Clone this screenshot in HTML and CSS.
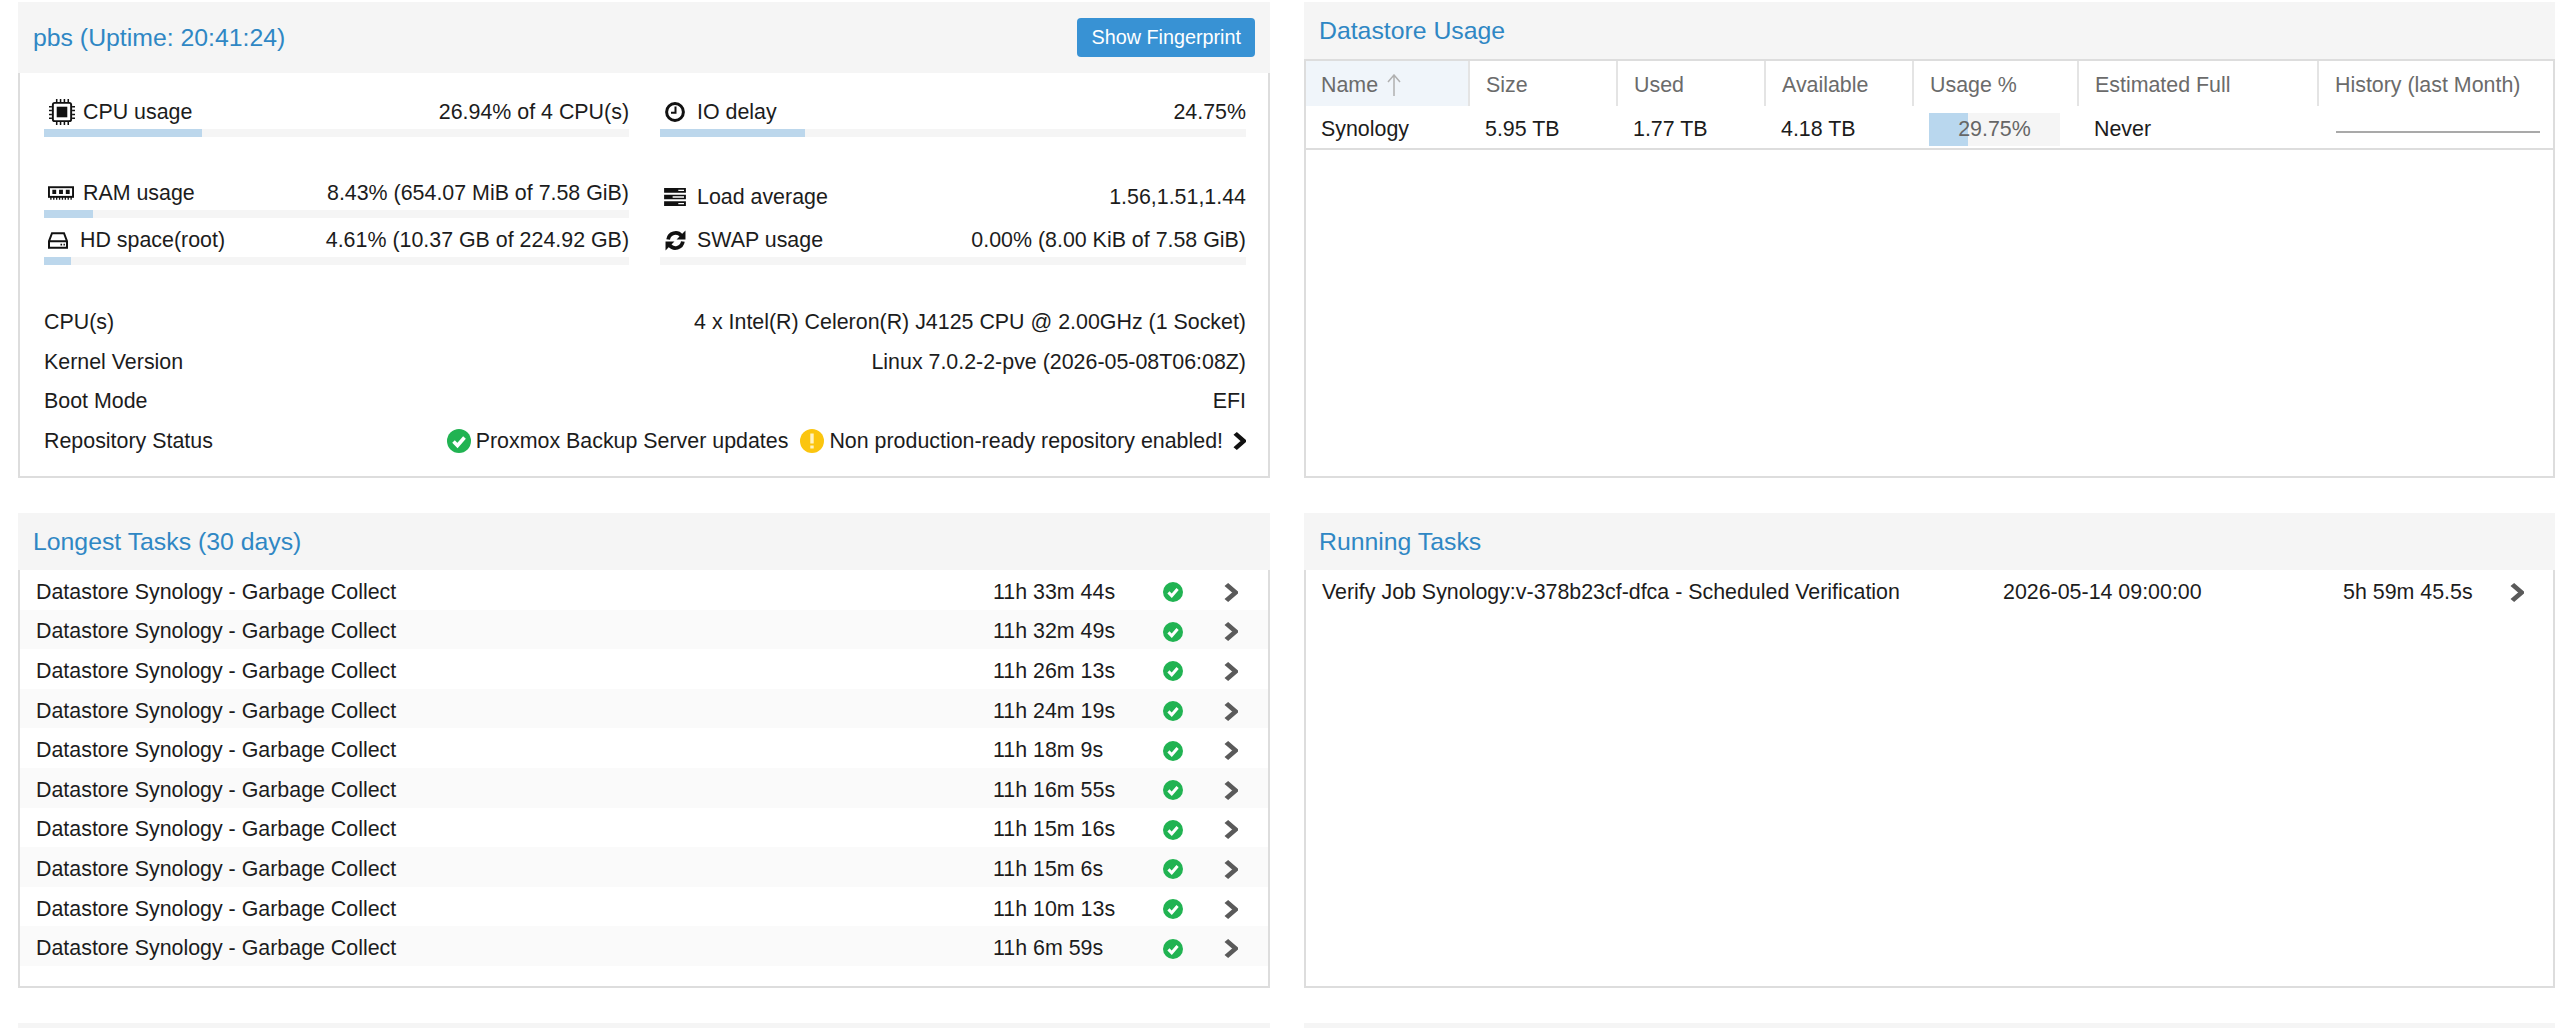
FILE: index.html
```html
<!DOCTYPE html>
<html lang="en">
<head>
    <meta charset="UTF-8">
    <title>Proxmox Backup Server - Dashboard</title>
    <link rel="stylesheet" href="styles.css">
</head>
<body>
    <svg class="sprites" width="0" height="0">
        <symbol id="check" viewBox="0 0 24 24">
            <circle cx="12" cy="12" r="12" fill="#21b352"/>
            <polyline points="6.5,12.5 10.5,16.5 17.5,8.5" fill="none" stroke="#fff" stroke-width="3.6"/>
        </symbol>
        <symbol id="chevron" viewBox="1 0.5 12 21" preserveAspectRatio="none">
            <polyline points="3,3 11,11 3,19" fill="none" stroke="currentColor" stroke-width="4.4"/>
        </symbol>
    </svg>

    <div class="dashboard">

        <!-- Node status -->
        <section class="panel">
            <header class="panel-head head-tall">
                <h2>pbs (Uptime: 20:41:24)</h2>
                <button class="btn">Show Fingerprint</button>
            </header>
            <div class="panel-body status-body">
                <div class="metrics">
                    <div class="metric gap-after">
                        <div class="metric-line">
                            <svg class="icon icon-cpu" viewBox="0 0 27 27">
                                <rect x="4" y="4" width="19" height="19" rx="2" fill="none" stroke="#111" stroke-width="2"/>
                                <rect x="8" y="8" width="11" height="11" fill="#111"/>
                                <path d="M8 0v3M12 0v3M16 0v3M20 0v3M8 24v3M12 24v3M16 24v3M20 24v3M0 8h3M0 12h3M0 16h3M0 20h3M24 8h3M24 12h3M24 16h3M24 20h3" stroke="#111" stroke-width="1.6"/>
                            </svg>
                            <span class="metric-label">CPU usage</span>
                            <span class="metric-value">26.94% of 4 CPU(s)</span>
                        </div>
                        <div class="bar"><div class="bar-fill" style="width: 26.94%"></div></div>
                    </div>
                    <div class="metric gap-after">
                        <div class="metric-line">
                            <svg class="icon icon-clock" viewBox="0 0 20 20">
                                <circle cx="10" cy="10" r="8.4" fill="none" stroke="#111" stroke-width="3"/>
                                <path d="M10.5 4.5v6.2H6" fill="none" stroke="#111" stroke-width="2"/>
                            </svg>
                            <span class="metric-label">IO delay</span>
                            <span class="metric-value">24.75%</span>
                        </div>
                        <div class="bar"><div class="bar-fill" style="width: 24.75%"></div></div>
                    </div>
                    <div class="metric">
                        <div class="metric-line">
                            <svg class="icon icon-ram" viewBox="0 0 27 14">
                                <rect x="1" y="1" width="25" height="10" fill="none" stroke="#111" stroke-width="2"/>
                                <path d="M4.5 3.5h4v4.5h-4zM11.5 3.5h4v4.5h-4zM18.5 3.5h4v4.5h-4z" fill="#111"/>
                                <path d="M3 11v3M6 11v3M9 11v3M12 11v3M15 11v3M18 11v3M21 11v3M24 11v3" stroke="#111" stroke-width="1.4"/>
                            </svg>
                            <span class="metric-label">RAM usage</span>
                            <span class="metric-value">8.43% (654.07 MiB of 7.58 GiB)</span>
                        </div>
                        <div class="bar"><div class="bar-fill" style="width: 8.43%"></div></div>
                    </div>
                    <div class="metric">
                        <div class="metric-line load-line">
                            <svg class="icon icon-load" viewBox="0 0 23 19">
                                <path d="M0 0h23v5H0zM0 7h23v5H0zM0 14h23v5H0z" fill="#111"/>
                                <path d="M15 2.5h6M9 9.5h12M15 16.5h6" stroke="#fff" stroke-width="1.5"/>
                            </svg>
                            <span class="metric-label">Load average</span>
                            <span class="metric-value">1.56,1.51,1.44</span>
                        </div>
                    </div>
                    <div class="metric">
                        <div class="metric-line">
                            <svg class="icon icon-hd" viewBox="0 0 20 17">
                                <path d="M4 1.2h12l3 8v6.6H1V9.2zM1 9.2h18" fill="none" stroke="#111" stroke-width="2"/>
                                <path d="M12.5 12.6h1.6M15.5 12.6h1.4" stroke="#111" stroke-width="1.6"/>
                            </svg>
                            <span class="metric-label">HD space(root)</span>
                            <span class="metric-value">4.61% (10.37 GB of 224.92 GB)</span>
                        </div>
                        <div class="bar"><div class="bar-fill" style="width: 4.61%"></div></div>
                    </div>
                    <div class="metric">
                        <div class="metric-line">
                            <svg class="icon icon-swap" viewBox="0 0 20 20">
                                <path d="M3 9a7.2 7.2 0 0 1 12.6-3.6M17 11a7.2 7.2 0 0 1-12.6 3.6" fill="none" stroke="#111" stroke-width="3.6"/>
                                <path d="M19.5 .5v8.5H11zM.5 19.5V11H9z" fill="#111"/>
                            </svg>
                            <span class="metric-label">SWAP usage</span>
                            <span class="metric-value">0.00% (8.00 KiB of 7.58 GiB)</span>
                        </div>
                        <div class="bar"><div class="bar-fill" style="width: 0%"></div></div>
                    </div>
                </div>

                <div class="info-row"><span>CPU(s)</span><span>4 x Intel(R) Celeron(R) J4125 CPU @ 2.00GHz (1 Socket)</span></div>
                <div class="info-row"><span>Kernel Version</span><span>Linux 7.0.2-2-pve (2026-05-08T06:08Z)</span></div>
                <div class="info-row"><span>Boot Mode</span><span>EFI</span></div>
                <div class="info-row">
                    <span>Repository Status</span>
                    <span class="repo-status">
                        <svg class="status-icon"><use href="#check"/></svg>
                        <span class="repo-text">Proxmox Backup Server updates</span>
                        <svg class="status-icon warn-icon" viewBox="0 0 24 24">
                            <circle cx="12" cy="12" r="12" fill="#fbc50f"/>
                            <path d="M12 4.5v10M12 16.5v3" stroke="#fff3c4" stroke-width="3.4"/>
                        </svg>
                        <span class="repo-text">Non production-ready repository enabled!</span>
                        <svg class="repo-chevron"><use href="#chevron"/></svg>
                    </span>
                </div>
            </div>
        </section>

        <!-- Datastore usage -->
        <section class="panel">
            <header class="panel-head">
                <h2>Datastore Usage</h2>
            </header>
            <div class="panel-body table-body">
                <table class="grid">
                    <thead>
                        <tr>
                            <th class="sorted col-name">
                                Name
                                <svg class="sort-arrow" viewBox="0 0 14 22"><path d="M7 22V1M1 8l6-7 6 7" fill="none" stroke="#b0b0b0" stroke-width="1.5"/></svg>
                            </th>
                            <th class="col-num">Size</th>
                            <th class="col-num">Used</th>
                            <th class="col-num">Available</th>
                            <th class="col-usage">Usage %</th>
                            <th class="col-full">Estimated Full</th>
                            <th>History (last Month)</th>
                        </tr>
                    </thead>
                    <tbody>
                        <tr>
                            <td>Synology</td>
                            <td>5.95 TB</td>
                            <td>1.77 TB</td>
                            <td>4.18 TB</td>
                            <td class="usage-cell">
                                <div class="usage"><div class="usage-fill" style="width: 29.75%"></div><span class="usage-text">29.75%</span></div>
                            </td>
                            <td>Never</td>
                            <td class="history-cell"><div class="sparkline"></div></td>
                        </tr>
                    </tbody>
                </table>
            </div>
        </section>

        <!-- Longest tasks -->
        <section class="panel">
            <header class="panel-head">
                <h2>Longest Tasks (30 days)</h2>
            </header>
            <div class="panel-body">
                <div class="task"><span>Datastore Synology - Garbage Collect</span><span>11h 33m 44s</span><svg class="task-status"><use href="#check"/></svg><svg class="task-chevron"><use href="#chevron"/></svg></div>
                <div class="task"><span>Datastore Synology - Garbage Collect</span><span>11h 32m 49s</span><svg class="task-status"><use href="#check"/></svg><svg class="task-chevron"><use href="#chevron"/></svg></div>
                <div class="task"><span>Datastore Synology - Garbage Collect</span><span>11h 26m 13s</span><svg class="task-status"><use href="#check"/></svg><svg class="task-chevron"><use href="#chevron"/></svg></div>
                <div class="task"><span>Datastore Synology - Garbage Collect</span><span>11h 24m 19s</span><svg class="task-status"><use href="#check"/></svg><svg class="task-chevron"><use href="#chevron"/></svg></div>
                <div class="task"><span>Datastore Synology - Garbage Collect</span><span>11h 18m 9s</span><svg class="task-status"><use href="#check"/></svg><svg class="task-chevron"><use href="#chevron"/></svg></div>
                <div class="task"><span>Datastore Synology - Garbage Collect</span><span>11h 16m 55s</span><svg class="task-status"><use href="#check"/></svg><svg class="task-chevron"><use href="#chevron"/></svg></div>
                <div class="task"><span>Datastore Synology - Garbage Collect</span><span>11h 15m 16s</span><svg class="task-status"><use href="#check"/></svg><svg class="task-chevron"><use href="#chevron"/></svg></div>
                <div class="task"><span>Datastore Synology - Garbage Collect</span><span>11h 15m 6s</span><svg class="task-status"><use href="#check"/></svg><svg class="task-chevron"><use href="#chevron"/></svg></div>
                <div class="task"><span>Datastore Synology - Garbage Collect</span><span>11h 10m 13s</span><svg class="task-status"><use href="#check"/></svg><svg class="task-chevron"><use href="#chevron"/></svg></div>
                <div class="task"><span>Datastore Synology - Garbage Collect</span><span>11h 6m 59s</span><svg class="task-status"><use href="#check"/></svg><svg class="task-chevron"><use href="#chevron"/></svg></div>
            </div>
        </section>

        <!-- Running tasks -->
        <section class="panel">
            <header class="panel-head">
                <h2>Running Tasks</h2>
            </header>
            <div class="panel-body">
                <div class="task running">
                    <span>Verify Job Synology:v-378b23cf-dfca - Scheduled Verification</span>
                    <span>2026-05-14 09:00:00</span>
                    <span>5h 59m 45.5s</span>
                    <svg class="task-chevron"><use href="#chevron"/></svg>
                </div>
            </div>
        </section>

        <!-- Next row, cut off by the window -->
        <section class="panel"><header class="panel-head head-stub"></header></section>
        <section class="panel"><header class="panel-head head-stub"></header></section>
    </div>
</body>
</html>
```

FILE: styles.css
```css
html, body {
    height: 100%;
    margin: 0;
    overflow: hidden;
    background-color: #ffffff;
}

body {
    font-family: "Liberation Sans", Arial, sans-serif;
    font-size: 21.4px;
    color: #1c1c1c;
}

.sprites {
    position: absolute;
}

/* Main Layout */
.dashboard {
    display: grid;
    grid-template-columns: 1252px 1251px;
    grid-template-rows: 476px 475px 5px;
    column-gap: 34px;
    row-gap: 35px;
    padding: 2px 0 0 18px;
}

/* Panels */
.panel {
    display: flex;
    flex-direction: column;
    min-height: 0;
}

.panel-head {
    display: flex;
    flex-shrink: 0;
    align-items: center;
    justify-content: space-between;
    height: 57px;
    padding: 0 15px;
    background-color: #f5f5f5;
}

.head-tall {
    height: 71px;
}

.head-stub {
    height: 5px;
}

.panel-head h2 {
    margin: 0;
    font-size: 24.8px;
    font-weight: normal;
    color: #2f87c4;
}

.panel-body {
    flex: 1;
    border: 2px solid #dddddd;
    border-top: 0;
}

.btn {
    height: 39px;
    padding: 0 14px;
    font-family: inherit;
    font-size: 19.8px;
    color: #ffffff;
    background-color: #3892d4;
    border: 0;
    border-radius: 4px;
}

/* Node Status */
.status-body {
    padding: 22px 24px 0;
}

.metrics {
    display: grid;
    grid-template-columns: 585px 586px;
    column-gap: 31px;
    margin-bottom: 33px;
}

.metric {
    height: 42px;
    margin-bottom: 5px;
}

.gap-after {
    margin-bottom: 39px;
}

.metric-line {
    display: flex;
    align-items: center;
    height: 34px;
}

.load-line {
    padding-top: 4px;
}

.metric-label {
    flex: 1;
}

.icon {
    flex-shrink: 0;
}

.icon-cpu {
    width: 26px;
    height: 26px;
    margin-left: 5px;
    margin-right: 8px;
}

.icon-ram {
    width: 26px;
    height: 14px;
    margin-left: 4px;
    margin-right: 9px;
}

.icon-hd {
    width: 20px;
    height: 17px;
    margin-left: 4px;
    margin-right: 12px;
}

.icon-clock {
    width: 20px;
    height: 20px;
    margin-left: 5px;
    margin-right: 12px;
}

.icon-load {
    width: 22px;
    height: 18px;
    margin-left: 4px;
    margin-right: 11px;
}

.icon-swap {
    width: 21px;
    height: 21px;
    margin-left: 5px;
    margin-right: 11px;
}

.bar {
    height: 8px;
    background-color: #f5f5f5;
}

.bar-fill {
    height: 100%;
    background-color: #bcd7ec;
}

.info-row {
    display: flex;
    align-items: center;
    justify-content: space-between;
    width: 1202px;
    height: 39.5px;
}

.repo-status {
    display: flex;
    align-items: center;
}

.status-icon {
    width: 24px;
    height: 24px;
    margin-right: 5px;
}

.warn-icon {
    margin-left: 12px;
}

.repo-chevron {
    width: 13px;
    height: 20px;
    margin-left: 10px;
    color: #111111;
}

/* Datastore Table */
.table-body {
    border-top: 2px solid #dddddd;
}

.grid {
    width: 100%;
    table-layout: fixed;
    border-collapse: collapse;
}

.grid th {
    box-sizing: border-box;
    height: 45px;
    padding: 3px 0 0 16px;
    font-weight: normal;
    text-align: left;
    color: #6b6b6b;
    border-left: 2px solid #e4e4e4;
    white-space: nowrap;
}

.grid th:first-child {
    border-left: 0;
    padding-left: 15px;
}

.col-name {
    width: 163px;
}

.col-num {
    width: 148px;
}

.col-usage {
    width: 165px;
}

.col-full {
    width: 240px;
}

.grid th.sorted {
    background-color: #f0f5fa;
}

.sort-arrow {
    width: 14px;
    height: 22px;
    margin-left: 3px;
    vertical-align: -4px;
}

.grid td {
    box-sizing: border-box;
    height: 43px;
    padding: 4px 0 0 16px;
    border-bottom: 2px solid #dddddd;
}

.grid td:first-child {
    padding-left: 15px;
}

.usage {
    position: relative;
    width: 131px;
    height: 33px;
    line-height: 33px;
    text-align: center;
    background-color: #f5f5f5;
}

.usage-fill {
    height: 100%;
    background-color: #b9d7ee;
}

.usage-text {
    position: absolute;
    top: 0;
    left: 0;
    width: 100%;
    color: #666666;
}

.grid td.history-cell {
    padding: 0 13px 0 18px;
}

.sparkline {
    height: 2px;
    margin-top: 10px;
    background-color: #a9a9a9;
}

/* Task Lists */
.task {
    box-sizing: border-box;
    display: grid;
    grid-template-columns: 957px 167px 26px 32px 26px;
    align-items: center;
    height: 39.6px;
    padding-top: 5px;
    padding-left: 16px;
}

.task:nth-child(even) {
    background-color: #fafafa;
}

.task span {
    white-space: nowrap;
}

.task-status {
    width: 20px;
    height: 20px;
    justify-self: center;
}

.task-chevron {
    width: 14px;
    height: 21px;
    grid-column: 5;
    justify-self: center;
    color: #5a5a5a;
}

.running {
    grid-template-columns: 681px 340px 161px 26px;
}

.running .task-chevron {
    grid-column: 4;
}
```
